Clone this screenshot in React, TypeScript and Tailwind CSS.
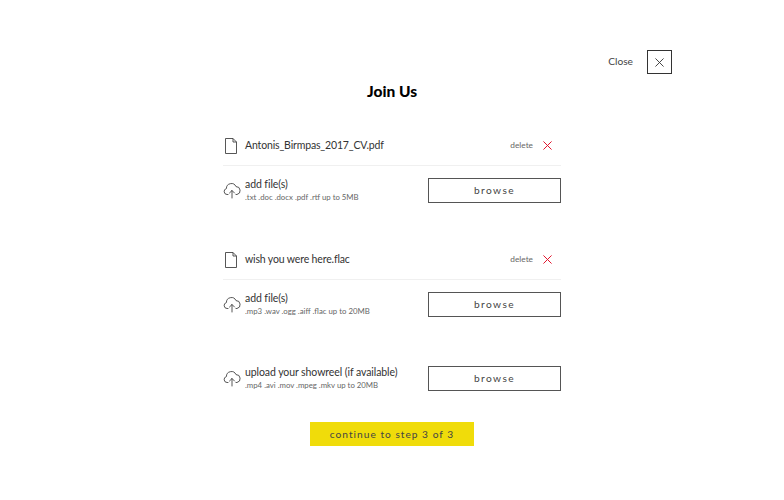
function CloseIcon({ size, color, weight }: { size: number; color: string; weight: number }) {
  return (
    <svg width={size} height={size} viewBox="0 0 10 10" fill="none" stroke={color} strokeWidth={weight}>
      <path d="M0.5 0.5l9 9M9.5 0.5l-9 9" />
    </svg>
  );
}

function FileIcon() {
  return (
    <svg width="14" height="18" viewBox="0 0 14 18" fill="none" stroke="#444" strokeWidth="0.9">
      <path d="M1.5 1.5h7.5l3.5 3.5v11.5h-11z" />
      <path d="M9 1.5v3.5h3.5" />
    </svg>
  );
}

function CloudIcon() {
  return (
    <svg width="18" height="17" viewBox="0 0 18 17" fill="none" stroke="#444" strokeWidth="0.9" strokeLinecap="round" strokeLinejoin="round">
      <path d="M5 12.5H4a3 3 0 0 1-.6-5.9A5 5 0 0 1 13 4.6a4 4 0 0 1 1 7.9h-1" />
      <path d="M9 16V8.5M6.5 11 9 8.5l2.5 2.5" />
    </svg>
  );
}

function FileRow({ name }: { name: string }) {
  return (
    <div className="flex h-[41px] items-center border-b border-[#f0f0f0] pt-[1px]">
      <div className="flex w-[22px] pl-[1px]">
        <FileIcon />
      </div>
      <p className="text-[10.5px] tracking-[-0.15px] text-[#333]">{name}</p>
      <p className="ml-auto text-[8.3px] text-[#666]">delete</p>
      <div className="mr-[9px] ml-[10px]">
        <CloseIcon size={9} color="#e2122a" weight={1.1} />
      </div>
    </div>
  );
}

function UploadRow({ title, hint }: { title: string; hint: string }) {
  return (
    <div className="flex h-[25px] items-center">
      <div className="flex w-[22px]">
        <CloudIcon />
      </div>
      <div className="flex flex-col pb-[2px]">
        <p className="text-[10.5px] leading-[13px] tracking-[-0.08px] text-[#333]">{title}</p>
        <p className="mt-[1px] text-[7.8px] leading-[10px] text-[#666]">{hint}</p>
      </div>
      <button className="ml-auto h-[25px] w-[133px] border border-[#555] text-[10.2px] tracking-[1.4px] text-[#444]">
        browse
      </button>
    </div>
  );
}

export default function App() {
  return (
    <div className="flex h-[500px] w-[784px] flex-col bg-white font-['Lato',sans-serif]">
      <div className="flex items-center justify-end pr-[112px] pt-[50px]">
        <span className="text-[10.2px] text-[#444]">Close</span>
        <div className="ml-[14px] flex h-[24px] w-[25px] items-center justify-center border border-[#333]">
          <CloseIcon size={9} color="#333" weight={1} />
        </div>
      </div>
      <h1 className="mt-[5px] text-center text-[15.5px] leading-[24px] font-black text-black">Join Us</h1>
      <div className="mx-auto mt-[22px] flex w-[338px] flex-col">
        <FileRow name="Antonis_Birmpas_2017_CV.pdf" />
        <div className="mt-[12px]">
          <UploadRow title="add file(s)" hint=".txt .doc .docx .pdf .rtf up to 5MB" />
        </div>
        <div className="mt-[36px]">
          <FileRow name="wish you were here.flac" />
        </div>
        <div className="mt-[12px]">
          <UploadRow title="add file(s)" hint=".mp3 .wav .ogg .aiff .flac up to 20MB" />
        </div>
        <div className="mt-[49px]">
          <UploadRow title="upload your showreel (if available)" hint=".mp4 .avi .mov .mpeg .mkv up to 20MB" />
        </div>
      </div>
      <button className="mx-auto mt-[31px] h-[24px] w-[164px] bg-[#f0dc0a] pt-[1px] text-[10.2px] tracking-[1px] text-[#444]">
        continue to step 3 of 3
      </button>
    </div>
  );
}
